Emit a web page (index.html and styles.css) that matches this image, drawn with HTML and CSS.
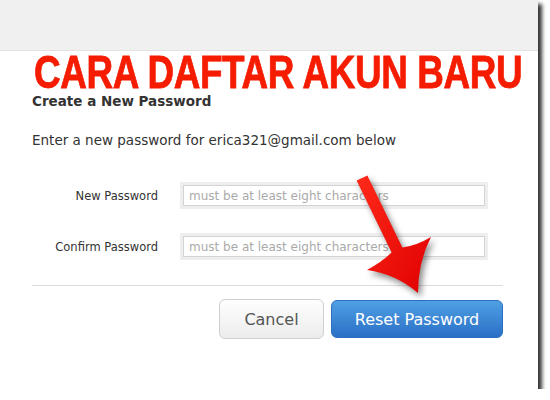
FILE: index.html
```html
<!DOCTYPE html>
<html>
<head>
<meta charset="utf-8">
<link rel="stylesheet" href="styles.css">
</head>
<body>
<div class="frame">
  <div class="topbar"></div>
  <div class="content">
    <h1 class="banner"><span class="banner-text">CARA DAFTAR AKUN BARU</span></h1>
    <h2 class="title">Create a New Password</h2>
    <p class="intro">Enter a new password for erica321@gmail.com below</p>
    <div class="form">
      <label class="label">New Password</label>
      <input class="field" type="password" placeholder="must be at least eight characters">
      <label class="label">Confirm Password</label>
      <input class="field" type="password" placeholder="must be at least eight characters">
    </div>
    <div class="divider"></div>
    <div class="actions">
      <button class="btn cancel">Cancel</button>
      <button class="btn primary">Reset Password</button>
    </div>
  </div>
  <svg class="arrow" width="538" height="389" viewBox="0 0 538 389">
    <defs>
      <linearGradient id="ag" x1="0" y1="0" x2="1" y2="1">
        <stop offset="0" stop-color="#ff2a1a"/>
        <stop offset="1" stop-color="#e00000"/>
      </linearGradient>
    </defs>
    <path d="M356.6,180.6 L367.4,175.4 L402.4,247.4 Q416,246 431,237 Q418,262 418,293 Q396,274 367,270 Q382,262 391.6,252.6 Z" fill="url(#ag)"/>
  </svg>
</div>
</body>
</html>
```

FILE: styles.css
```css
html, body {
  margin: 0;
  padding: 0;
  background: #fff;
}

.frame {
  position: relative;
  width: 538px;
  height: 389px;
  background: #fff;
  box-shadow: 4px 4px 4px rgba(0, 0, 0, 0.8);
  font-family: "DejaVu Sans", sans-serif;
  overflow: hidden;
}

.topbar {
  height: 51px;
  background: #f0f0f0;
  border-bottom: 1px solid #e2e2e2;
  box-sizing: border-box;
}

.content {
  padding: 0 35px 0 32px;
}

.banner {
  margin: 0;
  height: 42px;
  padding-left: 2px;
  font-family: "Liberation Sans", "Arial", sans-serif;
  font-weight: bold;
  font-size: 46px;
  line-height: 42px;
  color: #f51c00;
  white-space: nowrap;
  -webkit-text-stroke: 0.8px #f51c00;
}

.banner-text {
  display: inline-block;
  transform: scaleX(0.802);
  transform-origin: left center;
  letter-spacing: -0.5px;
}

.title {
  margin: 0;
  font-size: 13.5px;
  font-weight: bold;
  line-height: 16px;
  color: #333;
}

.intro {
  margin: 22px 0 0;
  font-size: 13.5px;
  line-height: 18px;
  color: #333;
}

.form {
  display: grid;
  grid-template-columns: 126px 302px;
  column-gap: 25px;
  row-gap: 24px;
  align-items: center;
  margin-top: 33px;
}

.label {
  text-align: right;
  font-size: 11.5px;
  color: #333;
}

.field {
  box-sizing: border-box;
  height: 21px;
  margin: 3px 0;
  width: 302px;
  border: 1px solid #d4d4d4;
  box-shadow: 0 0 0 3px #eeeeee;
  padding: 0 5px;
  font-family: "DejaVu Sans", sans-serif;
  font-size: 12px;
  color: #333;
  outline: none;
}

.field::placeholder {
  color: #aaa;
}

.divider {
  height: 1px;
  background: #dcdcdc;
  margin-top: 25px;
}

.actions {
  display: flex;
  justify-content: flex-end;
  align-items: center;
  gap: 7px;
  margin-top: 13px;
}

.btn {
  font-family: "DejaVu Sans", sans-serif;
  font-size: 16px;
  border-radius: 6px;
  box-sizing: border-box;
  cursor: pointer;
}

.cancel {
  width: 105px;
  height: 40px;
  color: #555;
  background: linear-gradient(#fefefe, #ececec);
  border: 1px solid #cfcfcf;
}

.primary {
  width: 172px;
  height: 38px;
  color: #fff;
  background: linear-gradient(#4fa0e4, #2b6fc6);
  border: 1px solid #2d6fc0;
}

.arrow {
  position: absolute;
  left: 0;
  top: 0;
  pointer-events: none;
  filter: drop-shadow(3px 4px 3px rgba(0, 0, 0, 0.45));
}
```
